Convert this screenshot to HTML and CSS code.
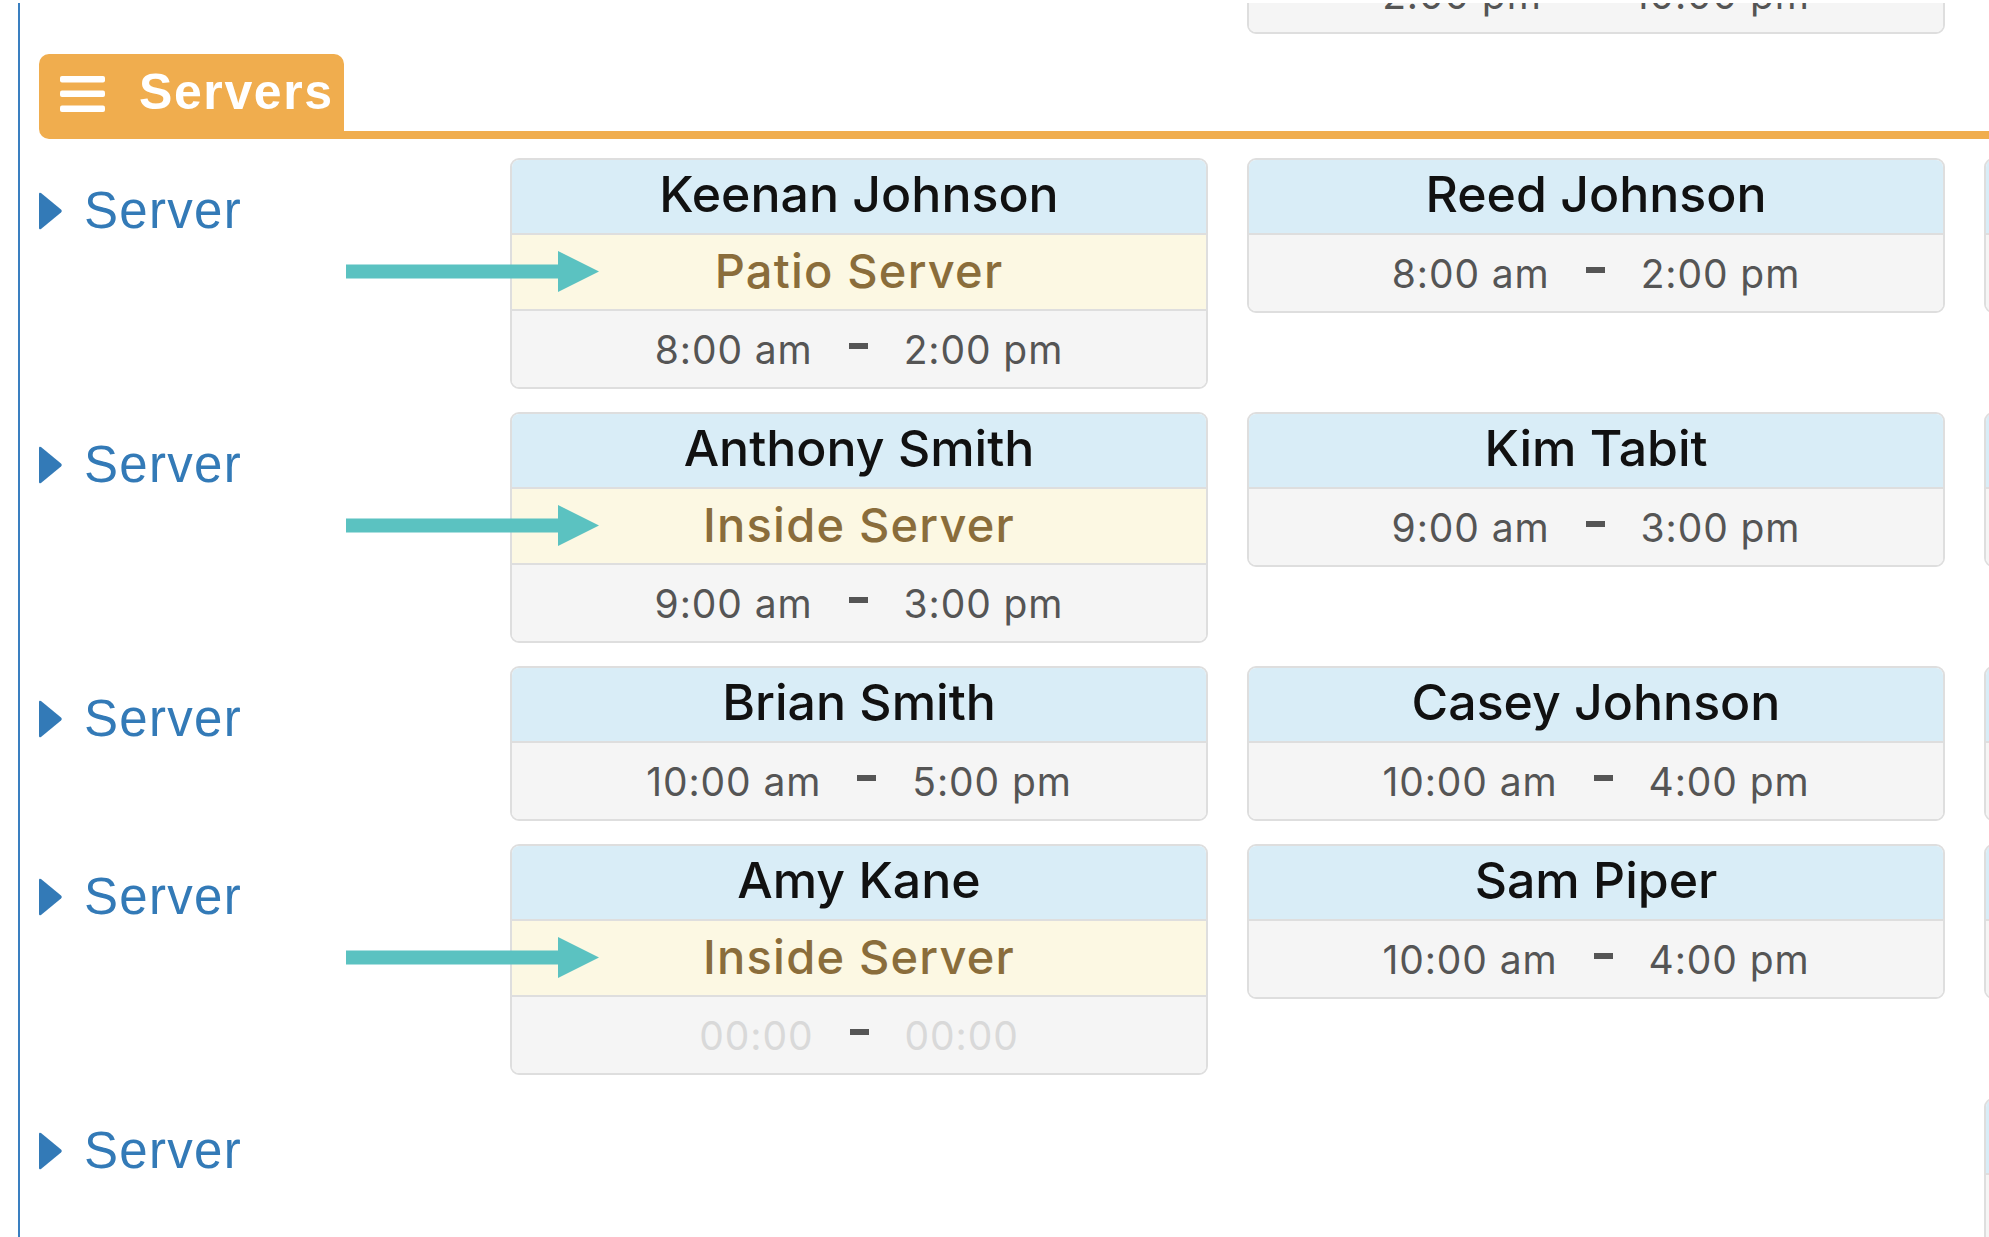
FILE: index.html
```html
<!DOCTYPE html>
<html lang="en">
<head>
    <meta charset="UTF-8">
    <meta name="viewport" content="width=device-width, initial-scale=1.0">
    <title>Servers</title>
    <link rel="stylesheet" href="styles.css">
</head>
<body>
<div class="page">
    <div class="board">
        <!-- tail of the previous section, cut by the top of the window -->
        <div class="prev-row">
            <div class="shifts">
                <div class="slot"></div>
                <div class="card">
                    <div class="card-name">&nbsp;</div>
                    <div class="card-time">2:00 pm<span class="dash"></span>10:00 pm</div>
                </div>
            </div>
        </div>

        <div class="section-head">
            <div class="section-tab">
                <svg class="menu-icon" viewBox="0 0 45 36" width="45" height="36">
                    <rect x="0" y="0" width="45" height="6.5" rx="2"/>
                    <rect x="0" y="14.5" width="45" height="6.5" rx="2"/>
                    <rect x="0" y="29.5" width="45" height="6.5" rx="2"/>
                </svg>
                <span>Servers</span>
            </div>
            <div class="section-line"></div>
        </div>

        <div class="rows">
            <div class="row">
                <div class="row-label">
                    <svg class="caret" viewBox="0 0 23 38" width="23" height="38"><path d="M2 1 L22 17.5 Q23.5 19 22 20.5 L2 37 Q0 38 0 36 L0 2 Q0 0 2 1 Z"/></svg>
                    <span>Server</span>
                </div>
                <div class="shifts">
                    <div class="card">
                        <div class="card-name">Keenan Johnson</div>
                        <div class="card-role">Patio Server</div>
                        <div class="card-time">8:00 am<span class="dash"></span>2:00 pm</div>
                    </div>
                    <div class="card">
                        <div class="card-name">Reed Johnson</div>
                        <div class="card-time">8:00 am<span class="dash"></span>2:00 pm</div>
                    </div>
                    <div class="card">
                        <div class="card-name">&nbsp;</div>
                        <div class="card-time">&nbsp;</div>
                    </div>
                </div>
                <svg class="pointer" viewBox="0 0 253 41" width="253" height="41"><rect x="0" y="13.5" width="214" height="14"/><polygon points="212,0 253,20.5 212,41"/></svg>
            </div>

            <div class="row">
                <div class="row-label">
                    <svg class="caret" viewBox="0 0 23 38" width="23" height="38"><path d="M2 1 L22 17.5 Q23.5 19 22 20.5 L2 37 Q0 38 0 36 L0 2 Q0 0 2 1 Z"/></svg>
                    <span>Server</span>
                </div>
                <div class="shifts">
                    <div class="card">
                        <div class="card-name">Anthony Smith</div>
                        <div class="card-role">Inside Server</div>
                        <div class="card-time">9:00 am<span class="dash"></span>3:00 pm</div>
                    </div>
                    <div class="card">
                        <div class="card-name">Kim Tabit</div>
                        <div class="card-time">9:00 am<span class="dash"></span>3:00 pm</div>
                    </div>
                    <div class="card">
                        <div class="card-name">&nbsp;</div>
                        <div class="card-time">&nbsp;</div>
                    </div>
                </div>
                <svg class="pointer" viewBox="0 0 253 41" width="253" height="41"><rect x="0" y="13.5" width="214" height="14"/><polygon points="212,0 253,20.5 212,41"/></svg>
            </div>

            <div class="row">
                <div class="row-label">
                    <svg class="caret" viewBox="0 0 23 38" width="23" height="38"><path d="M2 1 L22 17.5 Q23.5 19 22 20.5 L2 37 Q0 38 0 36 L0 2 Q0 0 2 1 Z"/></svg>
                    <span>Server</span>
                </div>
                <div class="shifts">
                    <div class="card">
                        <div class="card-name">Brian Smith</div>
                        <div class="card-time">10:00 am<span class="dash"></span>5:00 pm</div>
                    </div>
                    <div class="card">
                        <div class="card-name">Casey Johnson</div>
                        <div class="card-time">10:00 am<span class="dash"></span>4:00 pm</div>
                    </div>
                    <div class="card">
                        <div class="card-name">&nbsp;</div>
                        <div class="card-time">&nbsp;</div>
                    </div>
                </div>
            </div>

            <div class="row">
                <div class="row-label">
                    <svg class="caret" viewBox="0 0 23 38" width="23" height="38"><path d="M2 1 L22 17.5 Q23.5 19 22 20.5 L2 37 Q0 38 0 36 L0 2 Q0 0 2 1 Z"/></svg>
                    <span>Server</span>
                </div>
                <div class="shifts">
                    <div class="card">
                        <div class="card-name">Amy Kane</div>
                        <div class="card-role">Inside Server</div>
                        <div class="card-time"><span class="empty">00:00</span><span class="dash"></span><span class="empty">00:00</span></div>
                    </div>
                    <div class="card">
                        <div class="card-name">Sam Piper</div>
                        <div class="card-time">10:00 am<span class="dash"></span>4:00 pm</div>
                    </div>
                    <div class="card">
                        <div class="card-name">&nbsp;</div>
                        <div class="card-time">&nbsp;</div>
                    </div>
                </div>
                <svg class="pointer" viewBox="0 0 253 41" width="253" height="41"><rect x="0" y="13.5" width="214" height="14"/><polygon points="212,0 253,20.5 212,41"/></svg>
            </div>

            <div class="row">
                <div class="row-label">
                    <svg class="caret" viewBox="0 0 23 38" width="23" height="38"><path d="M2 1 L22 17.5 Q23.5 19 22 20.5 L2 37 Q0 38 0 36 L0 2 Q0 0 2 1 Z"/></svg>
                    <span>Server</span>
                </div>
                <div class="shifts">
                    <div class="slot"></div>
                    <div class="slot"></div>
                    <div class="card">
                        <div class="card-name">&nbsp;</div>
                        <div class="card-time">&nbsp;</div>
                    </div>
                </div>
            </div>
        </div>
    </div>
</div>
</body>
</html>
```

FILE: styles.css
```css
body {
    margin: 0;
    background-color: #fff;
    overflow: hidden;
    font-family: Inter, "Noto Sans", sans-serif;
}

.page {
    padding-top: 3px;
    height: 1234px;
}

.board {
    height: 100%;
    margin-left: 18px;
    padding-left: 19px;
    border-left: 2px solid #3a7fc0;
    overflow: hidden;
}

.prev-row {
    height: 31px;
    display: flex;
    align-items: flex-end;
    overflow: hidden;
    padding-left: 471px;
}

.section-head {
    display: flex;
    margin-top: 20px;
    width: 2200px;
}

.section-tab {
    display: flex;
    align-items: center;
    gap: 34px;
    height: 85px;
    box-sizing: border-box;
    padding: 0 10px 10px 21px;
    background-color: #f0ad4e;
    border-radius: 10px 10px 0 10px;
    color: #fff;
    font-family: "Liberation Sans", Arial, sans-serif;
    font-weight: bold;
    font-size: 50px;
    letter-spacing: 1.6px;
}

.menu-icon {
    fill: #fff;
    display: block;
    margin-top: 4px;
}

.section-line {
    flex: 1;
    align-self: flex-end;
    height: 8px;
    background-color: #f0ad4e;
}

.rows {
    margin-top: 19px;
    display: flex;
    flex-direction: column;
    gap: 23px;
}

.row {
    position: relative;
    display: flex;
    align-items: flex-start;
}

.row-label {
    width: 471px;
    flex-shrink: 0;
    display: flex;
    align-items: center;
    gap: 22px;
    padding-top: 34px;
    color: #337ab7;
    font-family: "Liberation Sans", Arial, sans-serif;
    font-size: 51px;
    letter-spacing: 1.3px;
    line-height: 38px;
}

.caret {
    display: block;
    fill: #337ab7;
}

.shifts {
    display: grid;
    grid-template-columns: repeat(3, 698px);
    column-gap: 39px;
    align-items: start;
    flex-shrink: 0;
}

.card {
    box-sizing: border-box;
    width: 698px;
    border: 2px solid #dedede;
    border-radius: 9px;
    overflow: hidden;
    text-align: center;
}

.card-name,
.card-role,
.card-time {
    box-sizing: border-box;
    height: 76px;
    display: flex;
    align-items: center;
    justify-content: center;
    white-space: nowrap;
}

.card-name {
    height: 75px;
    background-color: #d9edf7;
    border-bottom: 2px solid #dedede;
    color: #111;
    font-size: 50px;
    font-weight: 500;
    padding-bottom: 5px;
}

.card-role {
    background-color: #fcf8e3;
    border-bottom: 2px solid #dedede;
    color: #8a6d3b;
    font-size: 47px;
    font-weight: 500;
    letter-spacing: 1.2px;
    padding-bottom: 4px;
}

.card-time {
    background-color: #f5f5f5;
    color: #555;
    font-size: 39px;
    letter-spacing: 0.9px;
}

.dash {
    display: inline-block;
    width: 19px;
    height: 6px;
    margin: 0 36px;
    background-color: #555;
    position: relative;
    top: -3px;
}

.empty {
    color: #d9d9d9;
}

.pointer {
    position: absolute;
    left: 307px;
    top: 93px;
    fill: #5bc2c1;
}
```
